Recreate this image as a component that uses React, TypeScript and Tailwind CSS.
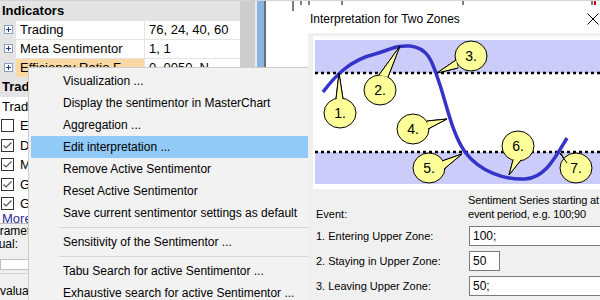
import React from 'react';

const PlusBox = () => (
  <svg width="9" height="9" viewBox="0 0 9 9" className="block">
    <rect x="0.5" y="0.5" width="8" height="8" fill="#fff" stroke="#8a9fbf" />
    <line x1="2" y1="4.5" x2="7" y2="4.5" stroke="#1f3f8a" />
    <line x1="4.5" y1="2" x2="4.5" y2="7" stroke="#1f3f8a" />
  </svg>
);

const CheckBox = ({ checked }: { checked: boolean }) => (
  <svg width="13" height="13" viewBox="0 0 13 13" className="block">
    <rect x="0.5" y="0.5" width="12" height="12" fill="#fff" stroke="#333" />
    {checked && <path d="M2.5 6.5 L5 9 L10.5 3.5" fill="none" stroke="#555" strokeWidth="1.2" />}
  </svg>
);

const propRows = [
  { name: 'Trading', value: '76, 24, 40, 60' },
  { name: 'Meta Sentimentor', value: '1, 1' },
  { name: 'Efficiency Ratio F...', value: '0, 0050, N...', active: true },
];

const checks = [
  { label: 'E', checked: false },
  { label: 'D', checked: true },
  { label: 'M', checked: true },
  { label: 'G', checked: true },
  { label: 'G', checked: true },
];

type MenuEntry = { label?: string; sep?: boolean; hot?: boolean };

const menu: MenuEntry[] = [
  { label: 'Visualization ...' },
  { label: 'Display the sentimentor in MasterChart' },
  { label: 'Aggregation ...' },
  { label: 'Edit interpretation ...', hot: true },
  { label: 'Remove Active Sentimentor' },
  { label: 'Reset Active Sentimentor' },
  { label: 'Save current sentimentor settings as default' },
  { sep: true },
  { label: 'Sensitivity of the Sentimentor ...' },
  { sep: true },
  { label: 'Tabu Search for active Sentimentor ...' },
  { label: 'Exhaustive search for active Sentimentor ...' },
];

// callout bubbles of the zone picture: centre, label, pointer tip and base
const bubbles = [
  { n: '1.', cx: 25, cy: 73, tip: [24, 33], base: [[21, 59], [28, 59]] },
  { n: '2.', cx: 65, cy: 50, tip: [85, 6], base: [[64, 35], [73, 37]] },
  { n: '3.', cx: 156, cy: 16, tip: [122, 33], base: [[141, 20], [143, 28]] },
  { n: '4.', cx: 98, cy: 89, tip: [132, 79], base: [[112, 81], [113, 89]] },
  { n: '5.', cx: 114, cy: 128, tip: [147, 114], base: [[127, 121], [129, 129]] },
  { n: '6.', cx: 203, cy: 106, tip: [194, 135], base: [[198, 120], [206, 120]] },
  { n: '7.', cx: 261, cy: 128, tip: [245, 113], base: [[248, 117], [252, 123]] },
];

const ZonePicture = () => (
  <svg width="285" height="144" viewBox="0 0 285 144" className="block">
    <rect x="0" y="0" width="285" height="33" fill="#ccccfa" />
    <rect x="0" y="112" width="285" height="32" fill="#ccccfa" />
    <line x1="0" y1="33" x2="285" y2="33" stroke="#000" strokeWidth="2.5" strokeDasharray="3 3" />
    <line x1="0" y1="112" x2="285" y2="112" stroke="#000" strokeWidth="2.5" strokeDasharray="3 3" />
    <path
      d="M8 52 C 20 36, 35 20, 60 14 C 75 10, 80 5, 95 6 C 115 8, 118 25, 125 45 C 133 70, 138 95, 150 112 C 165 132, 190 140, 210 139 C 230 138, 240 118, 252 98"
      fill="none"
      stroke="#3434c8"
      strokeWidth="3.5"
    />
    {bubbles.map((b) => (
      <g key={b.n}>
        <polygon
          points={`${b.tip[0]},${b.tip[1]} ${b.base[0][0]},${b.base[0][1]} ${b.base[1][0]},${b.base[1][1]}`}
          fill="#ffff99"
          stroke="#000"
          strokeWidth="1"
        />
        <ellipse cx={b.cx} cy={b.cy} rx="16" ry="15" fill="#ffff99" stroke="#000" strokeWidth="1" />
        <polygon
          points={`${b.tip[0]},${b.tip[1]} ${b.base[0][0]},${b.base[0][1]} ${b.base[1][0]},${b.base[1][1]}`}
          fill="#ffff99"
          stroke="none"
        />
        <line x1={b.tip[0]} y1={b.tip[1]} x2={b.base[0][0]} y2={b.base[0][1]} stroke="#000" />
        <line x1={b.tip[0]} y1={b.tip[1]} x2={b.base[1][0]} y2={b.base[1][1]} stroke="#000" />
        <text x={b.cx} y={b.cy + 5} textAnchor="middle" fontSize="14" fontFamily="Liberation Sans, Arial, sans-serif">
          {b.n}
        </text>
      </g>
    ))}
  </svg>
);

const formRows = [
  { label: '1. Entering Upper Zone:', value: '100;', wide: true },
  { label: '2. Staying in Upper Zone:', value: '50', wide: false },
  { label: '3. Leaving Upper Zone:', value: '50;', wide: true },
  { label: '4. Staying in Middle Zone:', value: '', wide: false },
];

export default function App() {
  return (
    <div className="relative flex w-[600px] h-[300px] overflow-hidden bg-white border-t border-[#cfd6e0] font-['Liberation_Sans',Arial,sans-serif] text-black">
      {/* property grid */}
      <div className="flex flex-col w-[240px] shrink-0 bg-[#f0f0f0] text-[13px]">
        <div className="h-[20px] flex items-center pl-[2px] bg-[#e4e4e4] font-bold">Indicators</div>
        {propRows.map((r) => (
          <div key={r.name} className="flex h-[19px] border-b border-[#e4e4e4] bg-white">
            <div className="w-[16px] flex items-center justify-center bg-[#e4e4e4]">
              <PlusBox />
            </div>
            <div className={`w-[129px] flex items-center pl-[4px] border-r border-[#e4e4e4] ${r.active ? 'bg-[#fbd8a2]' : ''}`}>
              {r.name}
            </div>
            <div className="flex-1 flex items-center pl-[4px]">{r.value}</div>
          </div>
        ))}
        <div className="h-[19px] flex items-center pl-[2px] bg-[#e4e4e4] font-bold">Trading Rules</div>
        <div className="h-[20px] flex items-center pl-[2px] bg-white">Trading Rules</div>
        {checks.map((c, i) => (
          <div key={i} className="h-[19.5px] flex items-center gap-[6px] pl-[1px] bg-white">
            <CheckBox checked={c.checked} />
            <span>{c.label}</span>
          </div>
        ))}
        <div className="h-[10px] flex items-center pl-[2px] bg-white text-[#2a2a9a] leading-none border-b border-[#bdbdbd]">More</div>
        <div className="mt-[1px] text-[12px] leading-[13px] ml-[-15px]">Parameter</div>
        <div className="text-[12px] leading-[13px] ml-[-16px]">Equal:</div>
        <div className="mt-[8px] h-[19px] bg-white border border-[#bfbfbf]" />
        <div className="mt-[3px] h-px bg-[#d4d4d4]" />
        <div className="mt-[8px] text-[12px] ml-[-8px]">Evaluation</div>
      </div>

      {/* scroll bar and splitter */}
      <div className="w-[15px] shrink-0 bg-[#cdcdcd]" />
      <div className="w-[2px] shrink-0 bg-[#ececec]" />
      <div className="w-[7px] shrink-0 bg-[#88b4e2]" />
      <div className="w-[2px] shrink-0 bg-[#6e6e6e]" />
      <div className="flex-1 bg-white">
        <svg width="334" height="12" className="block">
          <line x1="27" y1="0" x2="27" y2="10" stroke="#000" />
          <line x1="35" y1="0" x2="35" y2="4" stroke="#000" />
          <line x1="43" y1="0" x2="43" y2="4" stroke="#000" />
          <line x1="76" y1="0" x2="76" y2="5" stroke="#000" />
          <line x1="197" y1="0" x2="197" y2="5" stroke="#000" />
          <line x1="326" y1="0" x2="326" y2="7" stroke="#000" />
          <line x1="329" y1="0" x2="329" y2="7" stroke="#e00000" strokeWidth="2" />
        </svg>
      </div>

      {/* context menu */}
      <div className="absolute left-[28px] top-[66px] w-[292px] h-[260px] bg-[#f2f2f2] border border-[#cccccc] p-[2px] text-[12px]">
        {menu.map((m, i) =>
          m.sep ? (
            <div key={i} className="h-[7px] pt-[3px] pl-[28px]">
              <div className="h-px bg-[#d7d7d7]" />
            </div>
          ) : (
            <div key={i} className={`h-[22px] flex items-center pl-[32px] ${m.hot ? 'bg-[#91c9f7]' : ''}`}>
              {m.label}
            </div>
          )
        )}
      </div>

      {/* dialog */}
      <div className="absolute left-[308px] top-[4px] right-0 bottom-0 flex flex-col">
        <div className="h-[28px] flex items-center bg-white pl-[2px] text-[12px]">
          <span>Interpretation for Two Zones</span>
          <svg width="12" height="12" viewBox="0 0 12 12" className="ml-auto mr-[1px]">
            <line x1="0.5" y1="0.5" x2="11.5" y2="11.5" stroke="#000" />
            <line x1="11.5" y1="0.5" x2="0.5" y2="11.5" stroke="#000" />
          </svg>
        </div>
        <div className="flex-1 bg-[#f0f0f0] pl-[5px] pt-[3px] text-[11px] overflow-hidden">
          <div className="bg-white pt-[4px] pl-[2px] pb-[5px]">
            <ZonePicture />
          </div>
          <div className="flex items-end mt-[4px] pl-[3px] leading-[14px]">
            <div className="w-[152px]">Event:</div>
            <div className="whitespace-nowrap tracking-[-0.15px]">
              Sentiment Series starting at
              <br />
              event period, e.g. 100;90
            </div>
          </div>
          <div className="flex flex-col gap-[5px] mt-[5px]">
            {formRows.map((r) => (
              <div key={r.label} className="flex items-center h-[20px] pl-[3px]">
                <div className="w-[153px]">{r.label}</div>
                <div
                  className={`h-[20px] flex items-center pl-[3px] text-[12px] bg-white border border-[#7a7a7a] ${r.wide ? 'flex-1 border-r-0' : 'w-[31px]'}`}
                >
                  {r.value}
                </div>
              </div>
            ))}
          </div>
        </div>
      </div>
    </div>
  );
}
